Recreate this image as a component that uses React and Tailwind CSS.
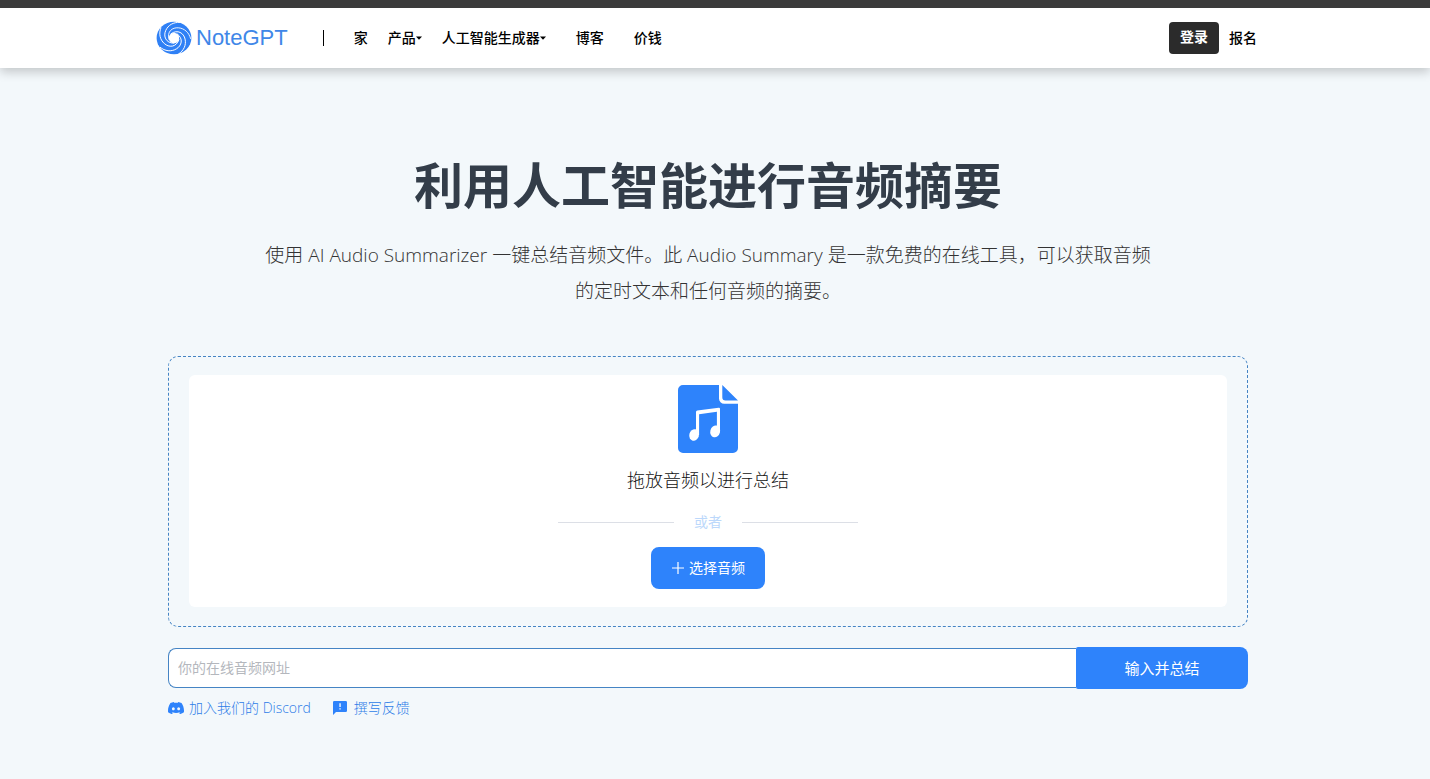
import React from "react";

const spokes = [0, 72, 144, 216, 288];

function LogoMark() {
  return (
    <svg viewBox="0 0 36 34" className="h-[34px] w-9" aria-hidden="true">
      <ellipse cx="18" cy="17" rx="17.4" ry="16.2" fill="#2f80f5" />
      <circle cx="18" cy="17" r="5.2" fill="#fff" />
      <g fill="none" stroke="#fff" strokeWidth="0.9" strokeLinecap="round">
        {spokes.map((a) => (
          <path key={a} transform={`rotate(${a} 18 17)`} d="M13 18.500C10.500 10.500 16.500 6.200 22.500 6.800C28.500 7.400 33 11.500 34.600 17.500" />
        ))}
      </g>
    </svg>
  );
}

function AudioFileIcon() {
  return (
    <svg viewBox="0 0 60 68" className="h-[68px] w-[60px]" aria-hidden="true">
      <path
        fill="#2e83fb"
        d="M5 0H41V13.5A5.2 5.2 0 0 0 46.2 18.7H60V63A5 5 0 0 1 55 68H5A5 5 0 0 1 0 63V5A5 5 0 0 1 5 0Z"
      />
      <path fill="#2e83fb" d="M44.3 0L60 15.4H47.5A3.2 3.2 0 0 1 44.3 12.2Z" />
      <g fill="#fff">
        <path d="M18 27Q18 25.700 19.300 25.500L40.700 22.700Q42 22.500 42 23.800V47H38.900V26.700L21.100 29.200V50H18Z" />
        <ellipse cx="16.100" cy="50" rx="4.800" ry="5.800" transform="rotate(14 16.100 50)" />
        <ellipse cx="37.200" cy="46.400" rx="4.900" ry="6" transform="rotate(14 37.200 46.400)" />
      </g>
    </svg>
  );
}

function DiscordIcon() {
  return (
    <svg viewBox="0 0 24 18" className="h-3 w-4 shrink-0" fill="#2e83fb" aria-hidden="true">
      <path d="M20.300 1.500A19.800 19.800 0 0 0 15.400 0L14.800 1.300A18.300 18.300 0 0 0 9.300 1.300L8.600 0A19.700 19.700 0 0 0 3.700 1.500C.500 6.200-.300 10.700.100 15.200A19.900 19.900 0 0 0 6.100 18.200L7.300 16.200 5.500 15.300 6 14.900A14.200 14.200 0 0 0 18.100 14.900L18.500 15.300 16.700 16.200 17.900 18.200A19.800 19.800 0 0 0 23.900 15.200C24.400 10 23.100 5.500 20.300 1.500ZM8 12.500C6.800 12.500 5.900 11.400 5.900 10.100S6.800 7.700 8 7.700 10.200 8.800 10.200 10.100 9.200 12.500 8 12.500ZM16 12.500C14.800 12.500 13.800 11.400 13.800 10.100S14.800 7.700 16 7.700 18.200 8.800 18.200 10.100 17.200 12.500 16 12.500Z" />
    </svg>
  );
}

function FeedbackIcon() {
  return (
    <svg viewBox="0 0 14 14" className="h-3.5 w-3.5 shrink-0" aria-hidden="true">
      <path fill="#2e83fb" d="M1.300 0H12.700A1.300 1.300 0 0 1 14 1.300V9.700A1.300 1.300 0 0 1 12.700 11H3L0 14V1.300A1.300 1.300 0 0 1 1.300 0Z" />
      <path fill="#fff" d="M6.400 2.200H7.700V6.100H6.400ZM6.400 7.300H7.700V8.600H6.400Z" />
    </svg>
  );
}

function Caret() {
  return (
    <svg viewBox="0 0 6 4" className="h-1 w-1.5" aria-hidden="true">
      <path d="M0 0.500H6L3 3.700Z" fill="#000" />
    </svg>
  );
}

function Header() {
  return (
    <header className="relative border-t-8 border-[#3b3b3b] bg-white pr-3.5 shadow-[0_4px_10px_rgba(0,0,0,0.2)]">
      <div className="mx-auto flex h-15 max-w-[1104px] items-center text-sm font-medium text-black">
        <a href="#" className="flex items-center gap-1 font-['Liberation_Sans',sans-serif] text-[22px] font-normal text-[#3f87e8]">
          <LogoMark />
          NoteGPT
        </a>
        <span className="ml-[35px] h-4 w-px bg-black" />
        <nav className="ml-[30px] flex items-center">
          <a href="#">家</a>
          <a href="#" className="ml-5 flex items-center">
            产品
            <Caret />
          </a>
          <a href="#" className="ml-5 flex items-center">
            人工智能生成器
            <Caret />
          </a>
          <a href="#" className="ml-[30px]">博客</a>
          <a href="#" className="ml-[30px]">价钱</a>
        </nav>
        <div className="ml-auto flex items-center gap-2.5 pr-[3px]">
          <button type="button" className="h-8 rounded bg-[#2b2b2b] px-[11px] pb-0.5 font-bold text-white">登录</button>
          <a href="#">报名</a>
        </div>
      </div>
    </header>
  );
}

export default function App() {
  return (
    <div className="min-h-screen bg-[#f3f8fb] font-['Open_Sans','Noto_Sans_CJK_SC',sans-serif]">
      <Header />
      <main className="pr-3.5">
        <div className="mx-auto flex max-w-[1080px] flex-col pt-[82px] pb-[60px]">
          <h1 className="text-center text-[49px] leading-[70px] font-bold text-[#333d49]">
            利用人工智能进行音频摘要
          </h1>
          <p className="mx-auto mt-[17px] max-w-[900px] text-center text-[19px] leading-9 font-light text-[#333]">
            使用 AI Audio Summarizer 一键总结音频文件。此 Audio Summary 是一款免费的在线工具，可以获取音频的定时文本和任何音频的摘要。
          </p>
          <section className="mt-[47px] rounded-[10px] border border-dashed border-[#4584c4] px-5 pt-[18px] pb-[19px]">
            <div className="flex flex-col items-center rounded-md bg-white pt-2.5 pb-[18px]">
              <AudioFileIcon />
              <p className="mt-[11px] text-lg leading-8 font-light text-[#111]">拖放音频以进行总结</p>
              <div className="mt-3.5 flex w-[300px] items-center gap-5 text-sm leading-6 text-[#bcd8fb]">
                <span className="h-px flex-1 bg-[#dcdfe6]" />
                或者
                <span className="h-px flex-1 bg-[#dcdfe6]" />
              </div>
              <button type="button" className="mt-[13px] flex h-[42px] items-center gap-1 rounded-lg bg-[#2e83fb] px-5 text-sm text-white">
                <svg viewBox="0 0 14 14" className="h-3.5 w-3.5" stroke="#fff" fill="none" aria-hidden="true">
                  <path d="M7 1V13M1 7H13" strokeWidth="1.200" />
                </svg>
                选择音频
              </button>
            </div>
          </section>
          <form className="mt-5 flex items-center" onSubmit={(e) => e.preventDefault()}>
            <input
              type="url"
              aria-label="你的在线音频网址"
              placeholder="你的在线音频网址"
              className="h-10 min-w-0 flex-1 rounded-l-lg border border-r-0 border-[#4584c4] bg-white px-[9px] pb-0.5 text-sm outline-none placeholder:text-[#b4b7bd]"
            />
            <button type="submit" className="h-[42px] w-[172px] rounded-r-lg rounded-l-xs bg-[#2e83fb] text-[15px] text-white">
              输入并总结
            </button>
          </form>
          <div className="mt-[7px] flex gap-[22px] text-sm leading-6 font-light text-[#2e7de8]">
            <a href="#" className="flex items-center gap-[5px]">
              <DiscordIcon />
              加入我们的 Discord
            </a>
            <a href="#" className="flex items-center gap-[7px]">
              <FeedbackIcon />
              撰写反馈
            </a>
          </div>
        </div>
      </main>
    </div>
  );
}
